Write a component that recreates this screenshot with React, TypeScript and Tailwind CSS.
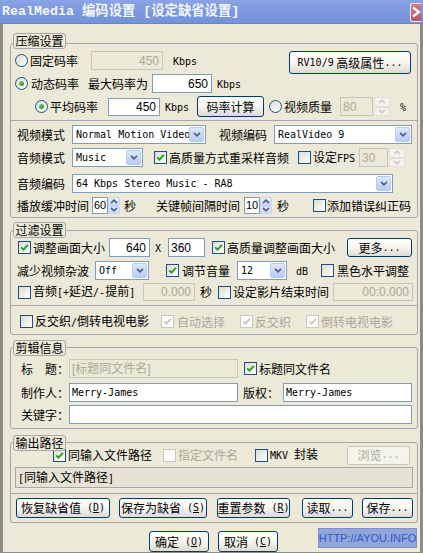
import React from "react";

type P = { c?: string; children?: React.ReactNode };

const LINE = "border-[#a5a7ac]";

// half-width latin run, like the dialog's bitmap font
function M({ children }: P) {
  return <span className="font-['DejaVu_Sans_Mono',monospace] text-[10px]">{children}</span>;
}

function Txt({ c = "", gray = false, children }: P & { gray?: boolean }) {
  return (
    <span
      className={`shrink-0 whitespace-nowrap text-[12px] leading-[14px] ${
        gray ? "text-[#aca899]" : "text-black"
      } ${c}`}
    >
      {children}
    </span>
  );
}

function Chev({ up = false, color = "#4d6185" }: { up?: boolean; color?: string }) {
  return (
    <svg width="8" height="5" viewBox="0 0 8 5">
      <path
        d={up ? "M1 4.2 L4 1.2 L7 4.2" : "M1 0.8 L4 3.8 L7 0.8"}
        fill="none"
        stroke={color}
        strokeWidth="1.7"
      />
    </svg>
  );
}

function Radio({ c = "", on = false }: P & { on?: boolean }) {
  return (
    <span
      className={`shrink-0 flex items-center justify-center w-[13px] h-[13px] rounded-full border border-[#1c5180] bg-linear-to-br from-[#dcdbd3] to-white ${c}`}
    >
      {on && <span className="w-[5px] h-[5px] rounded-full bg-linear-to-br from-[#6fd86f] to-[#1f8f1f]" />}
    </span>
  );
}

function Check({ c = "", on = false, off = false }: P & { on?: boolean; off?: boolean }) {
  return (
    <span
      className={`shrink-0 flex items-center justify-center w-[13px] h-[13px] border ${
        off ? "border-[#cac8bb] bg-white" : "border-[#1c5180] bg-linear-to-br from-[#dcdbd3] to-white"
      } ${c}`}
    >
      {on && (
        <svg width="9" height="9" viewBox="0 0 9 9">
          <path
            d="M1.2 4.3 L3.5 6.7 L7.9 1.9"
            fill="none"
            stroke={off ? "#cac8bb" : "#21a121"}
            strokeWidth="1.9"
          />
        </svg>
      )}
    </span>
  );
}

function Box({
  c = "",
  off = false,
  right = false,
  mono = false,
  small = false,
  children,
}: P & { off?: boolean; right?: boolean; mono?: boolean; small?: boolean }) {
  const font = mono
    ? "font-['DejaVu_Sans_Mono',monospace] text-[10px]"
    : small
    ? "font-['Liberation_Sans',sans-serif] text-[11px]"
    : "font-['Liberation_Sans','Noto_Sans_CJK_SC',sans-serif] text-[12px]";
  return (
    <div
      className={`shrink-0 flex items-center overflow-hidden border ${
        off ? "border-[#c9c7ba] bg-[#ece9d8] text-[#aca899]" : "border-[#7f9db9] bg-white text-black"
      } ${right ? "justify-end pr-[3px]" : small ? "pl-[1px]" : "pl-[2px]"} ${font} ${c}`}
    >
      <span className="whitespace-nowrap">{children}</span>
    </div>
  );
}

function Sel({ c = "", children }: P) {
  return (
    <div className={`shrink-0 flex items-stretch border border-[#7f9db9] bg-white p-[1px] ${c}`}>
      <span className="flex-1 min-w-0 overflow-hidden whitespace-nowrap pl-[2px] flex items-center font-['DejaVu_Sans_Mono',monospace] text-[10px] text-black">
        {children}
      </span>
      <span className="shrink-0 w-[15px] rounded-[2px] border border-[#b6c9f5] bg-linear-to-b from-[#dfe8fe] to-[#b7cbf7] flex items-center justify-center">
        <Chev />
      </span>
    </div>
  );
}

function Spin({ c = "", off = false }: P & { off?: boolean }) {
  const half = `flex-1 flex items-center justify-center rounded-[2px] border ${
    off ? "border-[#e2e0d6] bg-[#f4f3ee]" : "border-[#c3d3f6] bg-linear-to-b from-[#eaf0fd] to-[#c9d8fa]"
  }`;
  const col = off ? "#cfcdc2" : "#4d6185";
  return (
    <div className={`shrink-0 flex flex-col ${c}`}>
      <span className={half}>
        <Chev up color={col} />
      </span>
      <span className={half}>
        <Chev color={col} />
      </span>
    </div>
  );
}

function Btn({ c = "", off = false, children }: P & { off?: boolean }) {
  return (
    <div
      className={`shrink-0 flex items-center justify-center whitespace-nowrap rounded-[3px] border text-[12px] leading-[14px] ${
        off
          ? "border-[#c9c7ba] bg-[#f5f4ea] text-[#aca899]"
          : "border-[#003c74] bg-linear-to-b from-white via-[#f6f5f0] to-[#dedbcf] text-black"
      } ${c}`}
    >
      {children}
    </div>
  );
}

function Legend({ c = "", children }: P) {
  return (
    <span
      className={`absolute left-[2px] w-[53px] h-[16px] flex items-center justify-center rounded-[3px] border ${LINE} bg-[#ece9d8] text-[12px] leading-[14px] text-black ${c}`}
    >
      {children}
    </span>
  );
}

export default function App() {
  return (
    <div className="w-[423px] h-[553px] flex flex-col bg-[#ece9d8] overflow-hidden font-['Noto_Sans_CJK_SC',sans-serif]">
      {/* caption */}
      <div className="h-[24px] shrink-0 flex items-center bg-linear-to-b from-[#8ba4e6] via-[#7b97dd] to-[#7692da] border-b border-[#6682c9]">
        <span className="ml-[2px] whitespace-nowrap font-bold text-[13.33px] leading-[16px] text-[#f3f5ff] font-['Liberation_Mono','Noto_Sans_CJK_SC',monospace]">
          RealMedia 编码设置 [设定缺省设置]
        </span>
        <div className="ml-auto mr-[2px] mt-[1px] w-[11px] h-[19px] flex items-center justify-start border border-r-0 border-[#f2e6ea] rounded-l-[3px] bg-linear-to-b from-[#d47c8c] to-[#b95468] overflow-hidden">
          <svg width="10" height="12" viewBox="0 0 10 12">
            <path d="M2 1.5 L8 6 L2 10.5" fill="none" stroke="#ffffff" strokeWidth="2.2" />
          </svg>
        </div>
      </div>

      {/* client area */}
      <div className="flex-1 flex flex-col border-l-[3px] border-r-[3px] border-b border-[#8d8b82]">
        {/* 压缩设置 */}
        <div className={`relative shrink-0 ml-[7px] mt-[19px] w-[408px] h-[175px] border ${LINE} rounded-[3px]`}>
          <Legend c="-top-[11px]">压缩设置</Legend>

          <div className="flex items-center mt-[7px] h-[19px]">
            <Radio c="ml-[4px]" />
            <Txt c="ml-[2px] w-[48px]">固定码率</Txt>
            <Box off right c="ml-[13px] w-[72px] h-[19px]">
              450
            </Box>
            <Txt c="ml-[10px] w-[24px]">
              <M>Kbps</M>
            </Txt>
            <Btn c="ml-[92px] w-[122px] h-[23px] self-start">
              <M>RV10/9</M>&nbsp;高级属性<M>...</M>
            </Btn>
          </div>

          <div className="flex items-center mt-[4px] h-[19px]">
            <Radio on c="ml-[4px]" />
            <Txt c="ml-[3px] w-[48px]">动态码率</Txt>
            <Txt c="ml-[9px] w-[60px]">最大码率为</Txt>
            <Box right c="ml-[4px] w-[60px] h-[19px]">
              650
            </Box>
            <Txt c="ml-[5px]">
              <M>Kbps</M>
            </Txt>
          </div>

          <div className="flex items-center mt-[4px] h-[19px]">
            <Radio on c="ml-[24px]" />
            <Txt c="ml-[2px] w-[48px]">平均码率</Txt>
            <Box right c="ml-[10px] w-[52px] h-[18px]">
              450
            </Box>
            <Txt c="ml-[5px] w-[24px]">
              <M>Kbps</M>
            </Txt>
            <Btn c="ml-[8px] w-[67px] h-[21px]">码率计算</Btn>
            <Radio c="ml-[5px]" />
            <Txt c="ml-[2px] w-[48px]">视频质量</Txt>
            <Box off c="ml-[8px] w-[33px] h-[19px]">
              80
            </Box>
            <Spin off c="ml-[1px] w-[16px] h-[19px]" />
            <Txt c="ml-[10px]">
              <M>%</M>
            </Txt>
          </div>

          <div className={`mt-[4px] h-0 border-t ${LINE}`} />

          <div className="flex items-center mt-[4px] h-[19px]">
            <Txt c="ml-[6px] w-[48px]">视频模式</Txt>
            <Sel c="ml-[7px] w-[134px] h-[19px]">Normal Motion Video</Sel>
            <Txt c="ml-[13px] w-[48px]">视频编码</Txt>
            <Sel c="ml-[7px] w-[138px] h-[19px]">RealVideo 9</Sel>
          </div>

          <div className="flex items-center mt-[4px] h-[19px]">
            <Txt c="ml-[6px] w-[48px]">音频模式</Txt>
            <Sel c="ml-[7px] w-[71px] h-[19px]">Music</Sel>
            <Check on c="ml-[11px]" />
            <Txt c="ml-[2px] w-[120px]">高质量方式重采样音频</Txt>
            <Check c="ml-[9px]" />
            <Txt c="ml-[2px] w-[42px]">
              设定<M>FPS</M>
            </Txt>
            <Box off c="ml-[4px] w-[29px] h-[19px]">
              30
            </Box>
            <Spin off c="ml-[1px] w-[16px] h-[19px]" />
          </div>

          <div className="flex items-center mt-[7px] h-[19px]">
            <Txt c="ml-[6px] w-[48px]">音频编码</Txt>
            <Sel c="ml-[7px] w-[321px] h-[19px]">64 Kbps Stereo Music - RA8</Sel>
          </div>

          <div className="flex items-center mt-[4px] h-[17px]">
            <Txt c="ml-[6px] w-[72px]">播放缓冲时间</Txt>
            <Box small c="ml-[3px] w-[16px] h-[17px]">
              60
            </Box>
            <Spin c="w-[12px] h-[17px]" />
            <Txt c="ml-[4px] w-[12px]">秒</Txt>
            <Txt c="ml-[20px] w-[84px]">关键帧间隔时间</Txt>
            <Box small c="ml-[4px] w-[16px] h-[17px]">
              10
            </Box>
            <Spin c="w-[12px] h-[17px]" />
            <Txt c="ml-[5px] w-[12px]">秒</Txt>
            <Check c="ml-[24px]" />
            <Txt c="ml-[1px] w-[84px]">添加错误纠正码</Txt>
          </div>
        </div>

        {/* 过滤设置 */}
        <div className={`relative shrink-0 ml-[7px] mt-[12px] w-[408px] h-[105px] border ${LINE} rounded-[3px]`}>
          <Legend c="-top-[9px]">过滤设置</Legend>

          <div className="flex items-center mt-[7px] h-[19px]">
            <Check on c="ml-[7px]" />
            <Txt c="ml-[2px] w-[72px]">调整画面大小</Txt>
            <Box right c="ml-[4px] w-[41px] h-[19px]">
              640
            </Box>
            <Txt c="ml-[5px] w-[6px]">
              <M>X</M>
            </Txt>
            <Box c="ml-[7px] w-[37px] h-[19px]">360</Box>
            <Check on c="ml-[7px]" />
            <Txt c="ml-[2px] w-[108px]">高质量调整画面大小</Txt>
            <Btn c="ml-[12px] w-[65px] h-[19px]">
              更多<M>...</M>
            </Btn>
          </div>

          <div className="flex items-center mt-[4px] h-[19px]">
            <Txt c="ml-[6px] w-[72px]">减少视频杂波</Txt>
            <Sel c="ml-[6px] w-[54px] h-[19px]">Off</Sel>
            <Check on c="ml-[17px]" />
            <Txt c="ml-[3px] w-[48px]">调节音量</Txt>
            <Sel c="ml-[7px] w-[50px] h-[19px]">12</Sel>
            <Txt c="ml-[9px] w-[12px]">
              <M>dB</M>
            </Txt>
            <Check c="ml-[13px]" />
            <Txt c="ml-[3px] w-[72px]">黑色水平调整</Txt>
          </div>

          <div className="flex items-center mt-[3px] h-[18px]">
            <Check c="ml-[7px]" />
            <Txt c="ml-[2px] w-[102px]">
              音频<M>[+</M>延迟<M>/-</M>提前<M>]</M>
            </Txt>
            <Box off right c="ml-[8px] w-[52px] h-[18px]">
              0.000
            </Box>
            <Txt c="ml-[5px] w-[12px]">秒</Txt>
            <Check c="ml-[6px]" />
            <Txt c="ml-[2px] w-[96px]">设定影片结束时间</Txt>
            <Box off right c="ml-[4px] w-[80px] h-[18px]">
              00:0.000
            </Box>
          </div>

          <div className={`mt-[4px] h-0 border-t ${LINE}`} />

          <div className="flex items-center mt-[8px] h-[15px]">
            <Check c="ml-[9px]" />
            <Txt c="ml-[2px] w-[114px]">
              反交织<M>/</M>倒转电视电影
            </Txt>
            <Check off on c="ml-[12px]" />
            <Txt gray c="ml-[3px] w-[48px]">
              自动选择
            </Txt>
            <Check off on c="ml-[15px]" />
            <Txt gray c="ml-[2px] w-[36px]">
              反交织
            </Txt>
            <Check off on c="ml-[15px]" />
            <Txt gray c="ml-[2px] w-[72px]">
              倒转电视电影
            </Txt>
          </div>
        </div>

        {/* 剪辑信息 */}
        <div className={`relative shrink-0 ml-[7px] mt-[12px] w-[408px] h-[82px] border ${LINE} rounded-[3px]`}>
          <Legend c="-top-[8px]">剪辑信息</Legend>

          <div className="flex items-center mt-[11px] h-[19px]">
            <Txt c="ml-[10px] w-[48px]">标　题：</Txt>
            <Box off c="w-[169px] h-[19px]">
              [标题同文件名]
            </Box>
            <Check on c="ml-[6px]" />
            <Txt c="ml-[2px] w-[72px]">标题同文件名</Txt>
          </div>

          <div className="flex items-center mt-[5px] h-[19px]">
            <Txt c="ml-[10px] w-[48px]">制作人：</Txt>
            <Box mono c="w-[169px] h-[19px]">
              Merry-James
            </Box>
            <Txt c="ml-[5px] w-[36px]">版权：</Txt>
            <Box mono c="ml-[4px] w-[129px] h-[19px]">
              Merry-James
            </Box>
          </div>

          <div className="flex items-center mt-[3px] h-[19px]">
            <Txt c="ml-[10px] w-[48px]">关键字：</Txt>
            <Box c="w-[343px] h-[19px]" />
          </div>
        </div>

        {/* 输出路径 */}
        <div className={`relative shrink-0 ml-[7px] mt-[13px] w-[408px] h-[52px] border ${LINE} rounded-t-[3px]`}>
          <Legend c="-top-[8px]">输出路径</Legend>

          <div className="flex items-center mt-[3px] h-[18px]">
            <Check on c="ml-[42px]" />
            <Txt c="ml-[2px] w-[84px]">同输入文件路径</Txt>
            <Check off c="ml-[11px]" />
            <Txt gray c="ml-[2px] w-[60px]">
              指定文件名
            </Txt>
            <Check c="ml-[17px]" />
            <Txt c="ml-[2px] w-[48px]">
              <M>MKV&nbsp;</M>封装
            </Txt>
            <Btn off c="ml-[29px] w-[63px] h-[19px]">
              浏览<M>...</M>
            </Btn>
          </div>

          <div className="ml-[4px] mt-[3px] w-[398px] h-[21px] flex items-center pl-[2px] border border-[#a5a7ac] bg-[#e6e3d6]">
            <Txt>
              <M>[</M>同输入文件路径<M>]</M>
            </Txt>
          </div>
        </div>

        {/* preset buttons */}
        <div className={`shrink-0 ml-[7px] w-[408px] h-[29px] border border-t-0 ${LINE} rounded-b-[3px] flex items-start pt-[4px]`}>
          <Btn c="ml-[5px] w-[94px] h-[20px]">
            恢复缺省值
            <M>
              &nbsp;(<u>D</u>)
            </M>
          </Btn>
          <Btn c="ml-[9px] w-[88px] h-[20px]">
            保存为缺省
            <M>
              &nbsp;(<u>S</u>)
            </M>
          </Btn>
          <Btn c="ml-[10px] w-[73px] h-[20px]">
            重置参数
            <M>
              &nbsp;(<u>R</u>)
            </M>
          </Btn>
          <Btn c="ml-[12px] w-[51px] h-[20px]">
            读取<M>...</M>
          </Btn>
          <Btn c="ml-[9px] w-[51px] h-[20px]">
            保存<M>...</M>
          </Btn>
        </div>

        {/* dialog buttons */}
        <div className="shrink-0 flex items-start mt-[5px] h-[24px]">
          <Btn c="ml-[146px] mt-[3px] w-[60px] h-[21px]">
            确定
            <M>
              &nbsp;(<u>O</u>)
            </M>
          </Btn>
          <Btn c="ml-[9px] mt-[3px] w-[60px] h-[21px]">
            取消
            <M>
              &nbsp;(<u>C</u>)
            </M>
          </Btn>
          <div className="ml-[40px] w-[99px] h-[20px] flex items-center justify-center border border-[#7d90c8] bg-[#93a6da] font-['Liberation_Sans',sans-serif] text-[11px] text-[#2f58cf] whitespace-nowrap">
            HTTP://AYOU.INFO
          </div>
        </div>
      </div>
    </div>
  );
}
